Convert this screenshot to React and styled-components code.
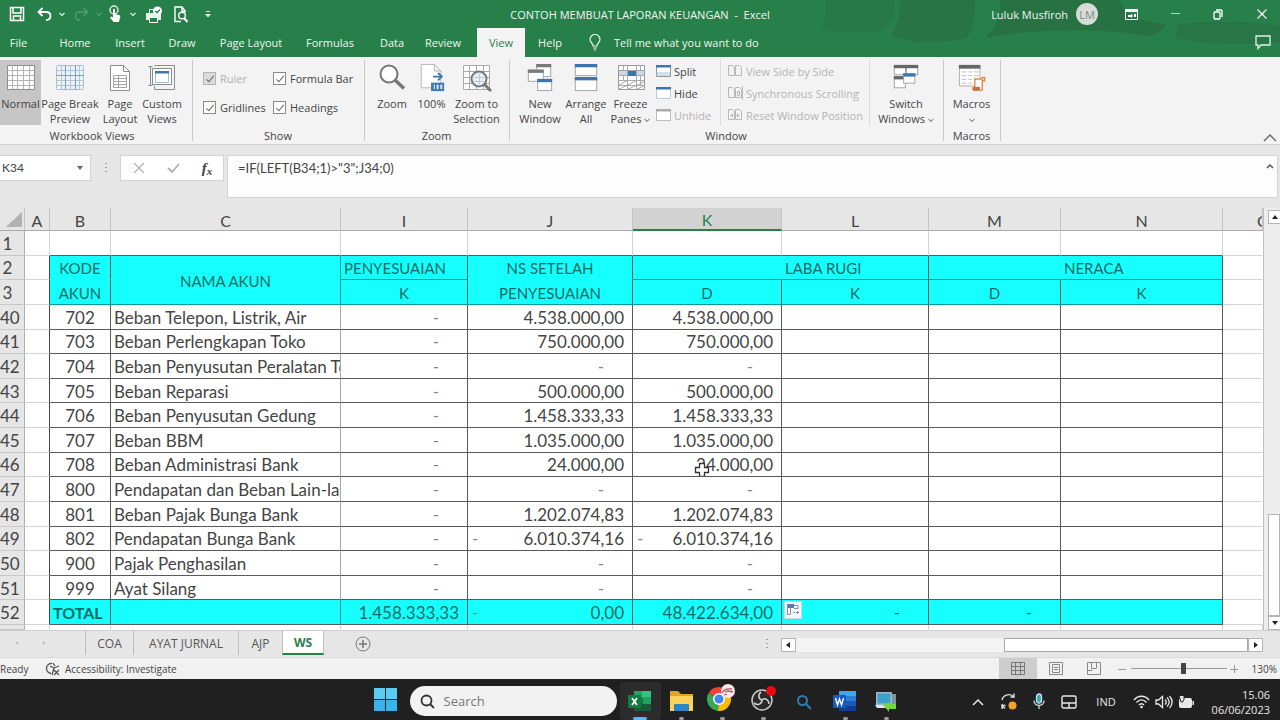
import React from "react"
import styled, { createGlobalStyle, css } from 'styled-components'

const uiFont=`"Open Sans", "Noto Sans", sans-serif`
const cellFont=`Lato, "Open Sans", sans-serif`
const green='#27804a'

const GlobalStyle=createGlobalStyle`
*{box-sizing:border-box;}
body{
margin:0;
font-family:${uiFont};
font-size:11px;
color:#444;
overflow:hidden;
}
button,input,textarea{
font:inherit;
color:inherit;
margin:0;
}
svg{display:block;}
`

const Page=styled.div`
height:100vh;
display:flex;
flex-direction:column;
`

const PlainButton=styled.button`
border:0;
padding:0;
background:none;
display:flex;
align-items:center;
justify-content:center;
gap:3px;
flex:none;
width:${p => p.$w ? p.$w + 'px' : 'auto'};
`

/* title bar and tabs */

const Top=styled.header`
position:relative;
background:${green};
color:#eef7f0;
`

const Clouds=styled.svg`
position:absolute;
top:0;
right:0;
`

const TitleBar=styled.div`
position:relative;
height:28px;
display:grid;
grid-template-columns:1fr auto 1fr;
align-items:center;
`

const TitleSide=styled.div`
display:flex;
align-items:center;
justify-content:${p => p.$end ? 'flex-end' : 'flex-start'};
`

const Title=styled.h1`
margin:0;
font-size:11px;
font-weight:400;
white-space:pre;
`

const Avatar=styled.span`
width:22px;
height:22px;
margin:0 6px 0 8px;
border-radius:50%;
background:#d8dcd8;
color:#7d8a80;
display:flex;
align-items:center;
justify-content:center;
`

const Tabs=styled.nav`
position:relative;
height:29px;
display:flex;
`

const Tab=styled.button`
border:0;
padding:0;
width:${p => p.$w}px;
background:${p => p.$active ? '#f3f3f3' : 'none'};
color:${p => p.$active ? green : '#eef7f0'};
white-space:nowrap;
`

const TellMe=styled.label`
display:flex;
align-items:center;
gap:12px;
margin-left:13px;
input{
width:200px;
border:0;
padding:0;
background:none;
}
input::placeholder{
color:#eef7f0;
opacity:1;
}
`

const Comments=styled(PlainButton)`
margin:0 8px 0 auto;
`

/* ribbon */

const Ribbon=styled.div`
height:88px;
display:flex;
background:#f3f3f3;
border-bottom:1px solid #d2d2d2;
`

const Group=styled.section`
flex:none;
display:flex;
flex-direction:column;
justify-content:space-between;
width:${p => p.$w}px;
margin:3px 0;
padding:0 8px 0 ${p => p.$left ? 0 : 7}px;
border-right:1px solid #c8c8c8;
`

const GroupBody=styled.div`
display:flex;
align-items:flex-start;
`

const GroupName=styled.h2`
margin:0;
font-size:11px;
line-height:10px;
font-weight:400;
text-align:center;
`

const BigButton=styled.button`
flex:none;
display:flex;
flex-direction:column;
align-items:center;
width:${p => p.$w}px;
height:65px;
padding:4px 0 0;
border:0;
background:${p => p.$active ? '#c6c6c6' : 'none'};
line-height:15px;
white-space:nowrap;
>svg{
flex:none;
height:28px;
margin-bottom:4px;
}
`

const Checks=styled.div`
display:grid;
grid-template-columns:70px 1fr;
row-gap:12px;
padding:10px 0 0 3px;
`

const CheckLabel=styled.label`
display:flex;
align-items:center;
gap:4px;
height:17px;
white-space:nowrap;
color:${p => p.$off ? '#b0b0b0' : '#444'};
input{
appearance:none;
flex:none;
position:relative;
width:13px;
height:13px;
border:1px solid #8a8a8a;
background:#fff;
}
input:disabled{
background:#dcdcdc;
border-color:#b4b4b4;
}
input:checked::after{
content:'';
position:absolute;
left:4px;
top:1px;
width:3px;
height:7px;
border:solid #666;
border-width:0 1px 1px 0;
transform:rotate(40deg);
}
`

const SmallList=styled.div`
flex:none;
display:flex;
flex-direction:column;
padding:0 4px 0 ${p => p.$line ? 6 : 4}px;
width:${p => p.$w}px;
${p => p.$line && css`
border-left:1px solid #dcdcdc;
border-right:1px solid #dcdcdc;
`}
`

const SmallButton=styled.button`
display:flex;
align-items:center;
gap:3px;
height:22px;
border:0;
padding:0;
background:none;
white-space:nowrap;
color:${p => p.disabled ? '#b4b4b4' : '#444'};
`

const Collapse=styled(PlainButton)`
margin:auto 3px 2px auto;
`

/* formula bar */

const FormulaBar=styled.div`
display:flex;
height:63px;
padding:10px 2px 0 0;
background:#e6e6e6;
font-family:${cellFont};
font-size:13px;
`

const NameBox=styled.label`
display:flex;
align-items:center;
width:91px;
height:26px;
padding-right:5px;
background:#fff;
border:1px solid #d4d4d4;
border-left:0;
input{
width:76px;
padding:0 0 2px 2px;
border:0;
background:none;
font-size:12px;
}
`

const Dots=styled.span`
width:29px;
height:26px;
display:flex;
align-items:center;
justify-content:center;
`

const FxBox=styled.div`
display:flex;
align-items:center;
width:104px;
height:26px;
margin-right:3px;
background:#fff;
border:1px solid #d4d4d4;
`

const Fx=styled.span`
font-family:"Liberation Serif", serif;
font-style:italic;
font-weight:700;
font-size:15px;
sub{
font-size:11px;
vertical-align:-2px;
}
`

const FormulaInput=styled.textarea`
flex:1;
height:43px;
padding:4px 10px;
border:1px solid #d4d4d4;
border-right:0;
background:#fdfdfd;
resize:none;
outline:0;
line-height:16px;
`

const FormulaEnd=styled.div`
height:43px;
padding:7px 3px;
background:#fdfdfd;
border:1px solid #d4d4d4;
border-left:0;
`

/* sheet */

const SheetArea=styled.main`
display:flex;
flex:1;
min-height:0;
background:#e6e6e6;
`

const SheetPane=styled.div`
flex:1;
min-width:0;
overflow:hidden;
`

const Sheet=styled.table`
width:100%;
height:100%;
table-layout:fixed;
border-collapse:separate;
border-spacing:0;
background:#fff;
font-family:${cellFont};
font-size:17px;
line-height:20px;
color:#444;
`

const ColHead=styled.th`
height:23px;
padding:${p => p.$cut ? '2px 0 0 34px' : '2px 0 0'};
overflow:hidden;
font-size:16px;
font-weight:400;
line-height:19px;
background:${p => p.$active ? '#d2d2d2' : '#e6e6e6'};
color:${p => p.$active ? green : '#444'};
border-right:1px solid #c4c4c4;
border-bottom:${p => p.$active ? `2px solid ${green}` : '1px solid #ababab'};
`

const Corner=styled.svg`
margin-left:6px;
`

const RowHead=styled.th`
padding:2px 9px 0 0;
font-weight:400;
background:#e6e6e6;
border-right:1px solid #b0b0b0;
border-bottom:1px solid #c8c8c8;
`

const Cell=styled.td`
position:relative;
padding:2px ${p => p.$dash ? 28 : p.$align === 'right' ? 8 : 0}px 0 ${p => p.$align === 'left' ? 3 : 0}px;
text-align:${p => p.$align || 'center'};
white-space:nowrap;
overflow:hidden;
border-right:1px solid ${p => p.$right || '#5a5a5a'};
border-bottom:1px solid ${p => p.$bottom || '#5a5a5a'};
${p => p.$dash && css`color:#888;`}
${p => p.$fill && css`
background:#16ffff;
color:#0b6b63;
`}
${p => p.$head && css`
font-size:15px;
`}
${p => p.$bold && css`
font-size:16px;
font-weight:700;
`}
`

const Tail=styled.tr`
height:5px;
td,th{padding:0;}
`

const Minus=styled.span`
float:left;
margin-left:4px;
color:#888;
`

const Cursor=styled.svg`
position:absolute;
left:61px;
top:9px;
`

const FillOptions=styled.button`
position:absolute;
left:2px;
top:1px;
width:18px;
height:18px;
padding:1px;
border:1px solid #c8d8d8;
background:#f6f6ff;
`

const ScrollV=styled.div`
width:17px;
padding:2px 0 0 4px;
display:flex;
flex-direction:column;
border-left:1px solid #c0c0c0;
background:#ededed;
`

const ArrowButton=styled.button`
flex:none;
width:${p => p.$wide ? 15 : 13}px;
height:14px;
padding:0;
display:flex;
align-items:center;
justify-content:center;
border:1px solid #b4b4b4;
background:#fff;
`

const TrackV=styled.div`
flex:1;
display:flex;
flex-direction:column;
justify-content:flex-end;
`

const ThumbV=styled.div`
height:26%;
border:1px solid #b4b4b4;
background:#fff;
`

/* sheet tabs */

const SheetTabs=styled.div`
display:flex;
height:27px;
background:#e6e6e6;
border-top:1px solid #cfcfcf;
`

const SheetNav=styled.div`
display:flex;
width:85px;
padding:0 28px 2px 4px;
justify-content:space-between;
align-items:center;
`

const SheetTab=styled.button`
width:${p => p.$w}px;
height:24px;
padding:0;
border:0;
background:${p => p.$active ? '#fff' : 'none'};
color:${p => p.$active ? green : '#555'};
font-size:12px;
font-weight:${p => p.$active ? 700 : 400};
white-space:nowrap;
border-left:1px solid #c0c0c0;
${p => p.$active && css`
border-bottom:2px solid ${green};
border-right:1px solid #c0c0c0;
`}
`

const ScrollH=styled.div`
display:flex;
align-items:flex-start;
width:39%;
margin:7px 17px 0 auto;
`

const TrackH=styled.div`
flex:1;
height:14px;
display:flex;
justify-content:flex-end;
background:#f3f3f3;
`

const ThumbH=styled.div`
width:54%;
border:1px solid #a8a8a8;
background:#fff;
`

/* status bar */

const StatusBar=styled.footer`
display:flex;
align-items:center;
height:22px;
background:#f1f1f1;
border-top:1px solid #dadada;
font-size:10px;
`

const Ready=styled.span`
width:44px;
`

const StatusRight=styled.div`
display:flex;
align-items:center;
align-self:stretch;
margin-left:auto;
padding-right:3px;
`

const ViewButton=styled(PlainButton)`
width:38px;
height:100%;
background:${p => p.$active ? '#cdcdcd' : 'none'};
`

const ZoomRange=styled.input`
appearance:none;
width:96px;
height:14px;
background:linear-gradient(#999,#999) center / 100% 1px no-repeat;
&::-webkit-slider-thumb{
appearance:none;
width:5px;
height:11px;
background:#444;
}
`

const ZoomValue=styled.span`
margin-left:11px;
`

/* taskbar */

const Taskbar=styled.div`
display:grid;
grid-template-columns:1fr auto 1fr;
height:41px;
background:#202020;
color:#e8e8e8;
`

const Apps=styled.div`
grid-column:2;
display:flex;
align-items:center;
padding-right:4px;
`

const AppButton=styled.button`
width:41px;
height:38px;
padding:${p => p.$top ?? 6}px 0 0;
border:0;
border-radius:4px;
background:${p => p.$active ? '#2c2c2c' : 'none'};
display:flex;
flex-direction:column;
justify-content:space-between;
align-items:center;
align-self:flex-end;
&::after{
content:'';
width:${p => p.$active ? 14 : 5}px;
height:3px;
border-radius:2px;
background:${p => p.$active ? '#5bb8ea' : p.$open ? '#9a9a9a' : 'none'};
}
`

const SearchBox=styled.label`
display:flex;
align-items:center;
gap:9px;
width:207px;
height:30px;
margin:3px 3px 0 9px;
padding-left:10px;
border-radius:15px;
background:#f2f2f2;
input{
width:150px;
border:0;
padding:0;
background:none;
outline:0;
font-size:13px;
}
input::placeholder{
color:#777;
opacity:1;
}
`

const Tray=styled.div`
display:flex;
align-items:center;
justify-content:flex-end;
padding:4px 10px 0 0;
`

const Clock=styled.time`
width:72px;
line-height:15px;
text-align:right;
`

const Caret=({ color = '#666', s = 6 }) => (
        <svg width={s} height={s} viewBox="0 0 6 6" fill="none" stroke={color} strokeWidth="1.2"><path d="M.5 2 3 4.4 5.5 2"/></svg>
)

const InlineSvg=styled.svg`
display:inline-block;
vertical-align:middle;
`

const TextCaret=() => (
        <InlineSvg width="6" height="6" viewBox="0 0 6 6" fill="none" stroke="#555"><path d="M.5 2 3 4.400 5.500 2"/></InlineSvg>
)

const Tri=({ d, color = '#222' }) => (
        <svg width="8" height="8" viewBox="0 0 8 8" fill={color}><path d={d}/></svg>
)

const GridIcon=({ stroke, frame }) => (
        <svg width="30" height="28" viewBox="0 0 30 28" fill="#fff" stroke={stroke}>
                <path stroke={frame} d="M1.5 1.5h27v24h-27z"/>
                <path d="M1.5 6.5h27M1.5 11.5h27M1.5 16.5h27M1.5 21.5h27M6.5 1.5v24M11.5 1.5v24M17.5 1.5v24M23.5 1.5v24"/>
        </svg>
)

const PageBreakIcon=() => (
        <svg width="30" height="28" viewBox="0 0 30 28" fill="none">
                <rect x="1.5" y="1.5" width="27" height="24" rx="1" fill="#eaf3fb" stroke="#a9bfd2"/>
                <path stroke="#b6c3ce" d="M1.5 6.5h27M1.5 16.5h27M1.5 21.5h27M6.5 1.5v24M15.5 1.5v24M24.5 1.5v24"/>
                <path stroke="#6da3cc" d="M1.5 11.5h27M10.5 1.5v24M20.5 1.5v24"/>
        </svg>
)

const PageLayoutIcon=() => (
        <svg width="30" height="28" viewBox="0 0 30 28" fill="none" stroke="#8c8c8c">
                <path fill="#fff" d="M5.5 1.5h13l6 6v19h-19z"/>
                <path d="M18.500 1.500v6h6"/>
                <path stroke="#a4a4a4" d="M8.500 11.500h13v12h-13zM8.500 14.500h13M8.500 17.500h13M8.500 20.500h13M13.500 11.500v12"/>
        </svg>
)

const CustomViewsIcon=() => (
        <svg width="30" height="28" viewBox="0 0 30 28" fill="none" stroke="#8c8c8c">
                <path d="M3.500 3v18M1.500 2.500h4M1.500 21.500h4M7.500 22v3.500h20v-24h-20"/>
                <path fill="#fff" d="M5.500 4.500h19v16h-19z"/>
                <path fill="#fff" stroke="#a3bed8" d="M8.500 8.500h13v10h-13z"/>
                <path fill="#3d76ad" stroke="none" d="M8 7h14v2.500H8z"/>
        </svg>
)

const ZoomIcon=() => (
        <svg width="30" height="28" viewBox="0 0 30 28" fill="none" stroke="#777">
                <circle cx="12" cy="10" r="8.500" fill="#fff" strokeWidth="2"/>
                <path strokeWidth="3.500" d="m18 16 9 8.500"/>
        </svg>
)

const Zoom100Icon=() => (
        <svg width="30" height="28" viewBox="0 0 30 30" fill="none">
                <path fill="#fff" stroke="#b4b4b4" d="M3.500.5h14l7 7v18h-21zM17.500.5v7h7"/>
                <path stroke="#3d76ad" strokeWidth="2" d="M16 13.500h10M21.500 9.500l4 4-4 4"/>
                <path fill="#3d7ab5" d="M14 20h14v9H14z"/>
                <path stroke="#fff" d="M17.500 22v5M20.500 22.500h1v4h-1zM24.500 22.500h1v4h-1z"/>
        </svg>
)

const ZoomSelIcon=() => (
        <svg width="30" height="28" viewBox="0 0 30 28" fill="none">
                <path fill="#fff" stroke="#aaa" d="M1.500 1.500h26v24h-26zM1.500 7.500h26M1.500 13.500h26M1.500 19.500h26M7.500 1.500v24M14.500 1.500v24M21.500 1.500v24"/>
                <circle cx="17" cy="15" r="7.500" fill="#e9eef3" stroke="#777" strokeWidth="2"/>
                <path stroke="#b9c8d6" d="M12 13.500h10M12 17.500h10M17.500 10v10"/>
                <path stroke="#777" strokeWidth="3" d="m22 20 7 7"/>
        </svg>
)

const Win=({ x, y, w, h, c }) => (
        <g>
                <rect x={x + .5} y={y + .5} width={w - 1} height={h - 1} fill="#fff" stroke="#a0a0a0"/>
                <rect x={x} y={y} width={w} height="3.500" fill={c}/>
        </g>
)

const NewWindowIcon=() => (
        <svg width="30" height="28" viewBox="0 0 30 30">
                <Win x={11} y={0} w={16} h={14} c="#7a7a7a"/>
                <Win x={2} y={6} w={17} h={13} c="#7a7a7a"/>
                <Win x={12} y={16} w={16} h={13} c="#3d76ad"/>
        </svg>
)

const ArrangeIcon=() => (
        <svg width="30" height="28" viewBox="0 0 30 30">
                <Win x={3} y={0} w={24} h={13} c="#3d76ad"/>
                <Win x={3} y={14} w={24} h={15} c="#3d76ad"/>
        </svg>
)

const FreezeIcon=() => (
        <svg width="30" height="28" viewBox="0 0 30 28" fill="none">
                <path fill="#fff" stroke="#999" d="M2.500 1.500h26v24h-26z"/>
                <path stroke="#aaa" d="M2.500 6.500h26M2.500 11.500h26M2.500 16.500h26M2.500 21.500h26M7.500 1.500v15M11.500 1.500v24M20.500 1.500v24M24.500 1.500v20"/>
                <path stroke="#aaa" d="m2.500 21.500 9-5M2.500 25.500l18-9M11.500 25.500l17-8M20.500 25.500l8-4"/>
                <path fill="#3d76ad" d="M12 7h8v5h-8z"/>
                <path fill="#c4d9ec" d="M3 7h8v4H3zM21 7h7v4h-7z"/>
        </svg>
)

const SwitchIcon=() => (
        <svg width="30" height="28" viewBox="0 0 30 30">
                <Win x={2} y={1} w={13} h={11} c="#666"/>
                <Win x={15} y={1} w={13} h={11} c="#666"/>
                <Win x={2} y={13} w={13} h={13} c="#666"/>
                <Win x={12} y={10} w={13} h={11} c="#3d76ad"/>
        </svg>
)

const MacrosIcon=() => (
        <svg width="30" height="28" viewBox="0 0 30 30" fill="none">
                <path fill="#fff" stroke="#aaa" d="M1.500 1.500h22v22h-22z"/>
                <path fill="#666" d="M1 1h23v4H1z"/>
                <path stroke="#bbb" d="M4 8.500h5M11 8.500h4M17 8.500h5M4 12.500h5M11 12.500h4M17 12.500h5M4 16.500h5M11 16.500h4M4 20.500h5M11 20.500h4"/>
                <path fill="#fff" stroke="#e0894a" strokeWidth="1.500" d="M18 16h8v-1.500h2.500V18H26v10h-8z"/>
                <path fill="#c9703a" d="M15.500 24.500h8v4h-8z"/>
        </svg>
)

const MiniWin=({ c, frame, half }) => (
        <svg width="15" height="14" viewBox="0 0 15 14">
                <path fill="#fff" stroke={frame} d="M.5 1.500h14v11H.5z"/>
                <path fill={c} d="M0 1h15v2.500H0z"/>
                {half && <path fill="#cfe0ef" d="M1 8h13v4H1z"/>}
        </svg>
)

const Pages=({ kind }) => (
        <svg width="16" height="14" viewBox="0 0 16 14" fill="none" stroke="#b8b8b8">
                <path d="M1.500 1.500h4l2 2v8h-6zM8.500 1.500h4l2 2v8h-6z"/>
                {kind === 1 && <path d="M15.500 0v14M10.500 5.500h2v4h-2z"/>}
                {kind === 2 && <path d="M3 7.500h3M10 7.500h3M5 5.500l1 2-1 2M11 5.500l-1 2 1 2"/>}
        </svg>
)

const FileIcons={
        save: <svg width="16" height="16" viewBox="0 0 16 16" fill="none" stroke="#fff" strokeWidth="1.500"><path d="M1.500 1.500h13v13h-13zM4 2v5h8V2M4.500 14v-4h7v4"/></svg>,
        undo: <svg width="16" height="14" viewBox="0 0 16 14" fill="none" stroke="#fff" strokeWidth="1.800"><path d="M5.500 1 1.500 5l4 4M2 5h7c6 0 6 8 0 8"/></svg>,
        redo: <svg width="16" height="14" viewBox="0 0 16 14" fill="none" stroke="#4f9c6a" strokeWidth="1.600"><path d="m10.500 1 4 4-4 4M14 5H7C1 5 1 13 7 13"/></svg>,
        touch: <svg width="14" height="18" viewBox="0 0 14 18" fill="none"><circle cx="6" cy="5" r="4" stroke="#dcebe0" strokeWidth="1.500"/><path fill="#fff" d="M5 4.500c0-1 2-1 2 0V9l4 1c1 .3 1.500 1 1.200 2L11 17H5.500L2 12.500l1-1 2 1z"/></svg>,
        print: <svg width="18" height="17" viewBox="0 0 18 17" fill="none"><path fill="#e6f0e8" d="M1 7h15v7H1z"/><path stroke="#fff" fill={green} d="M4.500 11.500h8v5h-8zM4.500 7V3.500h5"/><circle cx="12.500" cy="5" r="4.500" fill="#fff"/><path stroke={green} strokeWidth="1.300" d="m10.300 5 1.700 1.700L15 3.500"/></svg>,
        preview: <svg width="16" height="17" viewBox="0 0 16 17" fill="none" stroke="#fff" strokeWidth="1.400"><path d="M12.500 5.500 9 1H2v14.500h6M9 1v4.500h4"/><circle cx="9" cy="9.500" r="3.300"/><path strokeWidth="2" d="m11 12 3.500 4"/></svg>,
}

const AppIcons={
        windows: <svg width="23" height="23" viewBox="0 0 23 23"><path fill="#5ccdf2" d="M0 0h11v11H0zM12 0h11v11H12z"/><path fill="#38b3ec" d="M0 12h11v11H0zM12 12h11v11H12z"/></svg>,
        excel: <svg width="24" height="22" viewBox="0 0 24 22"><path fill="#21a366" d="M6 1h17v20H6z"/><path fill="#33c481" d="M14 1h9v6h-9z"/><path fill="#107c41" d="M6 8h9v6H6z"/><path fill="#185c37" d="M6 14h17v7H6z"/><rect y="5" width="13" height="13" rx="1" fill="#107c41"/><path stroke="#fff" strokeWidth="1.800" d="m4 8 5 7M9 8l-5 7"/></svg>,
        folder: <svg width="25" height="22" viewBox="0 0 25 22"><path fill="#e0a526" d="M1 1h8l3 3h12v6H1z"/><path fill="#fbd158" d="M1 6h23v15H1z"/><path fill="#2a86c8" d="M5 15q0-1 1-1h13q1 0 1 1v6H5z"/></svg>,
        chrome: <svg width="30" height="28" viewBox="0 0 30 28"><path fill="#ea4335" d="M12 15 1.600 9A12 12 0 0 1 22.400 9z"/><path fill="#34a853" d="m12 15-1 12A12 12 0 0 1 1.600 9z"/><path fill="#fbbc05" d="m12 15 10.400-6A12 12 0 0 1 11 27z"/><circle cx="12" cy="15" r="6" fill="#fff"/><circle cx="12" cy="15" r="4.500" fill="#4285f4"/><circle cx="21" cy="7" r="7" fill="#f7e9ea"/><path fill="none" stroke="#b5525e" strokeWidth="1.300" d="M15 9c3-5 6-4 10-4M18 8l3-1 5 1M17 11l3-1"/></svg>,
        obs: <svg width="28" height="26" viewBox="0 0 28 26" fill="none"><circle cx="13" cy="14" r="10" fill="#2a2a2a" stroke="#c8c8c8" strokeWidth="1.500"/><path stroke="#d0d0d0" strokeWidth="1.600" d="M13 14c-4-1-4-6-1-8M13 14c3-3 7 0 7 4M13 14c0 4-4 6-8 3"/><circle cx="22" cy="5" r="5" fill="#e80c10"/></svg>,
        find: <svg width="16" height="16" viewBox="0 0 16 16" fill="none" stroke="#2a7fb4" strokeWidth="2"><circle cx="6.500" cy="6.500" r="4.500"/><path d="m10 10 5 5"/></svg>,
        word: <svg width="24" height="22" viewBox="0 0 24 22"><path fill="#2b7cd3" d="M6 1h17v20H6z"/><path fill="#41a5ee" d="M6 1h17v5H6z"/><path fill="#185abd" d="M6 11h17v5H6z"/><path fill="#103f91" d="M6 16h17v5H6z"/><rect y="5" width="13" height="13" rx="1" fill="#185abd"/><path fill="none" stroke="#fff" strokeWidth="1.400" d="m2.500 8 2 7 2-6 2 6 2-7"/></svg>,
        monitor: <svg width="24" height="22" viewBox="0 0 24 22"><path fill="#9fb7c8" d="M2 2h16v13H2z"/><path fill="#3aa0cc" d="M3.500 3.500h13v10h-13z"/><path fill="#7d94a2" d="M18 4h4v12h-4z"/><path fill="#dfe6ea" d="M1 15h18l-2 3H3z"/><path fill="#74d63c" d="m9 15 6-3v2h7v5h-7v3z"/></svg>,
}

const tray={
        up: <svg width="12" height="8" viewBox="0 0 12 8" fill="none" stroke="#e8e8e8" strokeWidth="1.500"><path d="m1 7 5-5 5 5"/></svg>,
        sync: <svg width="18" height="18" viewBox="0 0 18 18" fill="none" stroke="#ddd" strokeWidth="1.400"><path d="M2 7a7 7 0 0 1 12-3M14 .5V4h-3.500M5 15.500A7 7 0 0 1 2 11M2 16v-3.500h3.500"/><circle cx="12.500" cy="12.500" r="4" fill="#f0a030" stroke="none"/></svg>,
        mic: <svg width="14" height="17" viewBox="0 0 14 17" fill="none" stroke="#c9dfe3" strokeWidth="1.300"><rect x="4.500" y="1" width="5" height="9" rx="2.500" fill="#3ba7b8"/><path d="M2 7.500c0 6.500 10 6.500 10 0M7 12.500V16"/></svg>,
        pad: <svg width="16" height="14" viewBox="0 0 16 14" fill="none" stroke="#e8e8e8" strokeWidth="1.400"><rect x="1" y="1" width="14" height="12" rx="1.500"/><path d="M1 8h14M8 8v5"/></svg>,
        wifi: <svg width="17" height="14" viewBox="0 0 17 14" fill="none" stroke="#e8e8e8" strokeWidth="1.400"><path d="M1 5c4-5 11-5 15 0M3.500 7.500c3-3.500 7-3.500 10 0M6 10c1.500-1.700 3.500-1.700 5 0"/><circle cx="8.500" cy="12" r="1.300" fill="#e8e8e8" stroke="none"/></svg>,
        volume: <svg width="18" height="14" viewBox="0 0 18 14" fill="none" stroke="#e8e8e8" strokeWidth="1.300"><path d="M1 5h2.500L7.500 1.500v11L3.500 9H1zM10 4.500c1.500 1.500 1.500 3.500 0 5M12 2.500c3 3 3 6 0 9M14.500 1c3.500 4 3.500 8 0 12"/></svg>,
        battery: <svg width="17" height="14" viewBox="0 0 17 14"><rect x="1" y="3" width="13" height="10" rx="2" fill="#e8e8e8"/><path fill="#e8e8e8" d="M14.500 6h1.500v4h-1.500z"/><path stroke="#202020" fill="#e8e8e8" d="M1 .5h5v4L4.500 7H3z"/></svg>,
}

const cols=[
        ['', 25], ['A', 25], ['B', 61], ['C', 230], ['I', 127], ['J', 165],
        ['K', 149], ['L', 147], ['M', 132], ['N', 162], ['O', 40],
]

const rows=[
        [40, '702', 'Beban Telepon, Listrik, Air', '-', '4.538.000,00', '4.538.000,00'],
        [41, '703', 'Beban Perlengkapan Toko', '-', '750.000,00', '750.000,00'],
        [42, '704', 'Beban Penyusutan Peralatan Toko', '-', '-', '-'],
        [43, '705', 'Beban Reparasi', '-', '500.000,00', '500.000,00'],
        [44, '706', 'Beban Penyusutan Gedung', '-', '1.458.333,33', '1.458.333,33'],
        [45, '707', 'Beban BBM', '-', '1.035.000,00', '1.035.000,00'],
        [46, '708', 'Beban Administrasi Bank', '-', '24.000,00', '24.000,00'],
        [47, '800', 'Pendapatan dan Beban Lain-lain', '-', '-', '-'],
        [48, '801', 'Beban Pajak Bunga Bank', '-', '1.202.074,83', '1.202.074,83'],
        [49, '802', 'Pendapatan Bunga Bank', '-', '-6.010.374,16', '-6.010.374,16'],
        [50, '900', 'Pajak Penghasilan', '-', '-', '-'],
        [51, '999', 'Ayat Silang', '-', '-', '-'],
]

const faint='#d4d4d4'
const teal='#0a9a98'
const cyan='#16ffff'

const Amount=({ value, children, ...rest }) => {
        const negative=value.length > 1 && value[0] === '-'
        return (
                <Cell $align="right" $dash={value === '-'} {...rest}>
                        {negative && <Minus>-</Minus>}
                        {negative ? value.slice(1) : value}
                        {children}
                </Cell>
        )
}

const Header=() => (
        <Top>
                <Clouds width="580" height="57" viewBox="0 0 580 57" fill="#296f42" aria-hidden="true">
                        <path opacity=".35" d="M125 0h70q0 20-12 30-30 6-62-2 6-14 4-28z"/>
                        <path opacity=".7" d="M200 0h75q2 20-8 38c-24 6-54 6-76-2q10-18 9-36z"/>
                        <path opacity=".85" d="M300 0h120q4 20 46 24-2 8-16 12c-50-8-110-8-165 2q18-18 15-38z"/>
                        <path opacity=".6" d="M478 24q50-6 102 2v16c-40 4-80 2-105-4z"/>
                </Clouds>
                <TitleBar>
                        <TitleSide>
                                <PlainButton $w={34} aria-label="Save">{FileIcons.save}</PlainButton>
                                <PlainButton $w={22} aria-label="Undo">{FileIcons.undo}</PlainButton>
                                <PlainButton $w={12} aria-label="Undo list"><Caret color="#dfeee3"/></PlainButton>
                                <PlainButton $w={26} aria-label="Redo" disabled>{FileIcons.redo}</PlainButton>
                                <PlainButton $w={10} aria-label="Redo list" disabled><Caret color="#4f9c6a"/></PlainButton>
                                <PlainButton $w={22} aria-label="Touch mode">{FileIcons.touch}</PlainButton>
                                <PlainButton $w={14} aria-label="Touch mode list"><Caret color="#dfeee3"/></PlainButton>
                                <PlainButton $w={28} aria-label="Quick print">{FileIcons.print}</PlainButton>
                                <PlainButton $w={26} aria-label="Print preview">{FileIcons.preview}</PlainButton>
                                <PlainButton $w={28} aria-label="Customize toolbar">
                                        <svg width="6" height="7" viewBox="0 0 6 7" fill="#dfeee3"><path d="M1 0h4v1H1zM0 3h6L3 6.500z"/></svg>
                                </PlainButton>
                        </TitleSide>
                        <Title>CONTOH MEMBUAT LAPORAN KEUANGAN  -  Excel</Title>
                        <TitleSide $end>
                                Luluk Musfiroh
                                <Avatar>LM</Avatar>
                                <PlainButton $w={54} aria-label="Ribbon display options">
                                        <svg width="13" height="11" viewBox="0 0 13 11"><path fill="none" stroke="#fff" d="M.5.5h12v10H.5z"/><path fill="#fff" d="M0 0h13v3H0zM3 6h3V4.500L8 7 6 9V8H3zM9 5h2v3H9z"/></svg>
                                </PlainButton>
                                <PlainButton $w={34} aria-label="Minimize">
                                        <svg width="9" height="2"><path fill="#b9d6c1" d="M0 0h9v1H0z"/></svg>
                                </PlainButton>
                                <PlainButton $w={52} aria-label="Restore">
                                        <svg width="10" height="11" viewBox="0 0 10 11" fill="none" stroke="#fff" strokeWidth="1.300"><rect x="1" y="3" width="6" height="7" rx="1"/><path d="M3 1h5q1 0 1 1v6"/></svg>
                                </PlainButton>
                                <PlainButton $w={36} aria-label="Close">
                                        <svg width="10" height="10" viewBox="0 0 10 10" stroke="#fff" strokeWidth="1.200"><path d="m.5.5 9 9M9.500.5l-9 9"/></svg>
                                </PlainButton>
                        </TitleSide>
                </TitleBar>
                <Tabs>
                        <Tab $w={37}>File</Tab>
                        <Tab $w={76}>Home</Tab>
                        <Tab $w={34}>Insert</Tab>
                        <Tab $w={70}>Draw</Tab>
                        <Tab $w={68}>Page Layout</Tab>
                        <Tab $w={90}>Formulas</Tab>
                        <Tab $w={34}>Data</Tab>
                        <Tab $w={68}>Review</Tab>
                        <Tab $w={48} $active>View</Tab>
                        <Tab $w={50}>Help</Tab>
                        <TellMe>
                                <svg width="14" height="17" viewBox="0 0 14 17" fill="none" stroke="#e4f1e7" strokeWidth="1.200"><path d="M5 12c0-3-3-3.500-3-6.500a5 5 0 0 1 10 0C12 8.500 9 9 9 12zM5 14h4M6 16h2"/></svg>
                                <input aria-label="Tell me what you want to do" placeholder="Tell me what you want to do"/>
                        </TellMe>
                        <Comments $w={18} aria-label="Comments">
                                <svg width="16" height="15" viewBox="0 0 16 15" fill="none" stroke="#e4f1e7" strokeWidth="1.300"><path d="M1 1h14v9H6l-3 3.500V10H1z"/></svg>
                        </Comments>
                </Tabs>
        </Top>
)

const RibbonBar=() => (
        <Ribbon>
                <Group $w={193} $left>
                        <GroupBody>
                                <BigButton $w={41} $active><GridIcon stroke="#b4b4b4" frame="#8c8c8c"/>Normal</BigButton>
                                <BigButton $w={58}><PageBreakIcon/>Page Break<br/>Preview</BigButton>
                                <BigButton $w={42}><PageLayoutIcon/>Page<br/>Layout</BigButton>
                                <BigButton $w={42}><CustomViewsIcon/>Custom<br/>Views</BigButton>
                        </GroupBody>
                        <GroupName>Workbook Views</GroupName>
                </Group>
                <Group $w={172}>
                        <Checks>
                                <CheckLabel $off><input type="checkbox" defaultChecked disabled/>Ruler</CheckLabel>
                                <CheckLabel><input type="checkbox" defaultChecked/>Formula Bar</CheckLabel>
                                <CheckLabel><input type="checkbox" defaultChecked/>Gridlines</CheckLabel>
                                <CheckLabel><input type="checkbox" defaultChecked/>Headings</CheckLabel>
                        </Checks>
                        <GroupName>Show</GroupName>
                </Group>
                <Group $w={145}>
                        <GroupBody>
                                <BigButton $w={40}><ZoomIcon/>Zoom</BigButton>
                                <BigButton $w={39}><Zoom100Icon/>100%</BigButton>
                                <BigButton $w={51}><ZoomSelIcon/>Zoom to<br/>Selection</BigButton>
                        </GroupBody>
                        <GroupName>Zoom</GroupName>
                </Group>
                <Group $w={434}>
                        <GroupBody>
                                <BigButton $w={46}><NewWindowIcon/>New<br/>Window</BigButton>
                                <BigButton $w={46}><ArrangeIcon/>Arrange<br/>All</BigButton>
                                <BigButton $w={43}><FreezeIcon/>Freeze<span>Panes <TextCaret/></span></BigButton>
                                <SmallList $w={68}>
                                        <SmallButton><MiniWin c="#3d76ad" frame="#999" half/>Split</SmallButton>
                                        <SmallButton><MiniWin c="#3d76ad" frame="#bcd"/>Hide</SmallButton>
                                        <SmallButton disabled><MiniWin c="#aaa" frame="#bbb"/>Unhide</SmallButton>
                                </SmallList>
                                <SmallList $w={150} $line>
                                        <SmallButton disabled><Pages/>View Side by Side</SmallButton>
                                        <SmallButton disabled><Pages kind={1}/>Synchronous Scrolling</SmallButton>
                                        <SmallButton disabled><Pages kind={2}/>Reset Window Position</SmallButton>
                                </SmallList>
                                <BigButton $w={72}><SwitchIcon/>Switch<span>Windows <TextCaret/></span></BigButton>
                        </GroupBody>
                        <GroupName>Window</GroupName>
                </Group>
                <Group $w={57}>
                        <GroupBody>
                                <BigButton $w={41}><MacrosIcon/>Macros<span><TextCaret/></span></BigButton>
                        </GroupBody>
                        <GroupName>Macros</GroupName>
                </Group>
                <Collapse aria-label="Collapse ribbon">
                        <svg width="14" height="9" viewBox="0 0 14 9" fill="none" stroke="#666" strokeWidth="1.400"><path d="m1 8 6-6 6 6"/></svg>
                </Collapse>
        </Ribbon>
)

const SheetTable=() => (
        <Sheet>
                <colgroup>
                        {cols.map(([name, w]) => <col key={name} style={{ width: w }}/>)}
                </colgroup>
                <thead>
                        <tr>
                                {cols.map(([name]) => (
                                        <ColHead key={name} $active={name === 'K'} $cut={name === 'O'}>
                                                {name || <Corner width="16" height="16" viewBox="0 0 16 16"><path fill="#b2b2b2" d="M16 0v15H0z"/></Corner>}
                                        </ColHead>
                                ))}
                        </tr>
                </thead>
                <tbody>
                        <tr>
                                <RowHead>1</RowHead>
                                <Cell $right={faint} $bottom={faint}/>
                                {cols.slice(2, 10).map(([name]) => <Cell key={name} $right={faint}/>)}
                                <Cell $right="#fff" $bottom={faint}/>
                        </tr>
                        <tr>
                                <RowHead>2</RowHead>
                                <Cell $right="#444" $bottom={faint}/>
                                <Cell $fill $head $bottom={cyan}>KODE</Cell>
                                <Cell $fill $head rowSpan={2} $right={teal} $bottom={teal}>NAMA AKUN</Cell>
                                <Cell $fill $head $align="left" $bottom={teal}>PENYESUAIAN</Cell>
                                <Cell $fill $head $bottom={cyan}>NS SETELAH</Cell>
                                <Cell $fill $head $right={cyan} $bottom={teal}/>
                                <Cell $fill $head $align="left" $bottom={teal}>LABA RUGI</Cell>
                                <Cell $fill $head $right={cyan} $bottom={teal}/>
                                <Cell $fill $head $align="left" $bottom={teal}>NERACA</Cell>
                                <Cell $right="#fff" $bottom={faint}/>
                        </tr>
                        <tr>
                                <RowHead>3</RowHead>
                                <Cell $right="#444" $bottom={faint}/>
                                <Cell $fill $head $bottom={teal}>AKUN</Cell>
                                <Cell $fill $head $bottom={teal}>K</Cell>
                                <Cell $fill $head $bottom={teal}>PENYESUAIAN</Cell>
                                <Cell $fill $head $bottom={teal}>D</Cell>
                                <Cell $fill $head $bottom={teal}>K</Cell>
                                <Cell $fill $head $bottom={teal}>D</Cell>
                                <Cell $fill $head $bottom={teal}>K</Cell>
                                <Cell $right="#fff" $bottom={faint}/>
                        </tr>
                        {rows.map(([n, code, name, adj, ns, profit]) => (
                                <tr key={n}>
                                        <RowHead>{n}</RowHead>
                                        <Cell $right="#444" $bottom={faint}/>
                                        <Cell>{code}</Cell>
                                        <Cell $align="left" $right="#a8a8a8">{name}</Cell>
                                        <Amount value={adj}/>
                                        <Amount value={ns}/>
                                        <Amount value={profit}>
                                                {n === 46 && (
                                                        <Cursor width="16" height="16" viewBox="0 0 16 16"><path fill="#fff" stroke="#333" strokeWidth="1.300" d="M5.500 1.500h5v4h4v5h-4v4h-5v-4h-4v-5h4z"/></Cursor>
                                                )}
                                        </Amount>
                                        <Cell/>
                                        <Cell/>
                                        <Cell/>
                                        <Cell $right="#fff" $bottom={faint}/>
                                </tr>
                        ))}
                        <tr>
                                <RowHead>52</RowHead>
                                <Cell $right="#444" $bottom={faint}/>
                                <Cell $fill $align="left" $bold>TOTAL</Cell>
                                <Cell $fill $right={teal}/>
                                <Amount $fill value="1.458.333,33"/>
                                <Amount $fill value="-0,00"/>
                                <Amount $fill value="48.422.634,00"/>
                                <Amount $fill value="-">
                                        <FillOptions aria-label="Auto fill options">
                                                <svg width="14" height="14" viewBox="0 0 14 14" fill="none" stroke="#8090a8"><path fill="#5a78b0" stroke="none" d="M1 1h7v4H1z"/><path d="M1.500 1.500v10h3M4.500 5v6M8 2.500h4v3H8M7 9.500h2M10 9.500h3M11.500 8v3"/></svg>
                                        </FillOptions>
                                </Amount>
                                <Amount $fill value="-"/>
                                <Cell $fill/>
                                <Cell $right="#fff" $bottom={faint}/>
                        </tr>
                        <Tail>
                                <RowHead/>
                                {cols.slice(1).map(([name]) => <Cell key={name} $right={faint} $bottom="#fff"/>)}
                        </Tail>
                </tbody>
        </Sheet>
)

const App=() => {

        return (
        <>
                <GlobalStyle/>
                <Page>
                        <Header/>
                        <RibbonBar/>
                        <FormulaBar>
                                <NameBox>
                                        <input aria-label="Name box" defaultValue="K34"/>
                                        <Tri color="#666" d="M1 2h6L4 6z"/>
                                </NameBox>
                                <Dots><svg width="2" height="12" fill="#a0a0a0"><path d="M0 1h2v1H0zM0 5h2v1H0zM0 9h2v1H0z"/></svg></Dots>
                                <FxBox>
                                        <PlainButton $w={35} aria-label="Cancel"><svg width="10" height="10" viewBox="0 0 10 10" stroke="#b0b0b0" strokeWidth="1.300"><path d="m0 0 10 10M10 0 0 10"/></svg></PlainButton>
                                        <PlainButton $w={34} aria-label="Enter"><svg width="13" height="10" viewBox="0 0 13 10" fill="none" stroke="#b0b0b0" strokeWidth="1.800"><path d="m1 5 4 4 7-8"/></svg></PlainButton>
                                        <PlainButton $w={34} aria-label="Insert function"><Fx>f<sub>x</sub></Fx></PlainButton>
                                </FxBox>
                                <FormulaInput aria-label="Formula" defaultValue={'=IF(LEFT(B34;1)>"3";J34;0)'}/>
                                <FormulaEnd><PlainButton aria-label="Collapse formula bar"><svg width="8" height="6" viewBox="0 0 8 6" fill="none" stroke="#555" strokeWidth="1.500"><path d="m1 5 3-3 3 3"/></svg></PlainButton></FormulaEnd>
                        </FormulaBar>
                        <SheetArea>
                                <SheetPane><SheetTable/></SheetPane>
                                <ScrollV>
                                        <ArrowButton aria-label="Scroll up"><Tri d="M1 6h6L4 2z"/></ArrowButton>
                                        <TrackV><ThumbV/></TrackV>
                                        <ArrowButton aria-label="Scroll down"><Tri d="M1 2h6L4 6z"/></ArrowButton>
                                </ScrollV>
                        </SheetArea>
                        <SheetTabs>
                                <SheetNav>
                                        <PlainButton $w={26} aria-label="Previous sheet"><Tri color="#b4b4b4" d="M5 2v4L3 4z"/></PlainButton>
                                        <PlainButton $w={26} aria-label="Next sheet"><Tri color="#b4b4b4" d="M3 2v4l2-2z"/></PlainButton>
                                </SheetNav>
                                <SheetTab $w={48}>COA</SheetTab>
                                <SheetTab $w={105}>AYAT JURNAL</SheetTab>
                                <SheetTab $w={44}>AJP</SheetTab>
                                <SheetTab $w={42} $active>WS</SheetTab>
                                <PlainButton $w={78} aria-label="New sheet"><svg width="16" height="16" viewBox="0 0 16 16" fill="none" stroke="#777"><circle cx="8" cy="8" r="7"/><path strokeWidth="1.500" d="M8 4v8M4 8h8"/></svg></PlainButton>
                                <ScrollH>
                                        <svg width="17" height="14" fill="#a0a0a0"><path d="M2 1h2v1H2zM2 5h2v1H2zM2 9h2v1H2z"/></svg>
                                        <ArrowButton $wide aria-label="Scroll left"><Tri d="M6 1v6L2 4z"/></ArrowButton>
                                        <TrackH><ThumbH/></TrackH>
                                        <ArrowButton $wide aria-label="Scroll right"><Tri d="M2 1v6l4-3z"/></ArrowButton>
                                </ScrollH>
                        </SheetTabs>
                        <StatusBar>
                                <Ready>Ready</Ready>
                                <PlainButton>
                                        <svg width="18" height="14" viewBox="0 0 18 14" fill="none" stroke="#555" strokeWidth="1.300"><path d="M8 1.500a5 5 0 1 0-1 10M9 1l2 3M6 4l4 2-2 7M10 6l5-2M10 8l5 5M15 8l-5 5"/></svg>
                                        Accessibility: Investigate
                                </PlainButton>
                                <StatusRight>
                                        <ViewButton $active aria-label="Normal view"><svg width="14" height="13" viewBox="0 0 14 13" fill="none" stroke="#777"><path d="M.5.5h13v12H.5zM.5 4.500h13M.5 8.500h13M4.500.5v12M9.500.5v12"/></svg></ViewButton>
                                        <ViewButton aria-label="Page layout view"><svg width="14" height="13" viewBox="0 0 14 13" fill="none" stroke="#888"><path d="M.5.5h13v12H.5zM3.500 2.500h7v8h-7zM5 5.500h4M5 7.500h4"/></svg></ViewButton>
                                        <ViewButton aria-label="Page break view"><svg width="14" height="13" viewBox="0 0 14 13" fill="none" stroke="#888"><path d="M.5.5h13v12H.5zM4.500.5v6h4.500M9.500.5v6M.5 8.500h5"/></svg></ViewButton>
                                        <PlainButton $w={18} aria-label="Zoom out"><svg width="8" height="8" stroke="#999"><path d="M0 4.500h8"/></svg></PlainButton>
                                        <ZoomRange type="range" aria-label="Zoom" min="0" max="100" defaultValue="55"/>
                                        <PlainButton $w={14} aria-label="Zoom in"><svg width="8" height="8" stroke="#999"><path d="M0 4.500h8M4.500 0v8"/></svg></PlainButton>
                                        <ZoomValue>130%</ZoomValue>
                                </StatusRight>
                        </StatusBar>
                        <Taskbar>
                                <Apps>
                                        <PlainButton $w={31} aria-label="Start">{AppIcons.windows}</PlainButton>
                                        <SearchBox>
                                                <svg width="15" height="15" viewBox="0 0 15 15" fill="none" stroke="#333" strokeWidth="1.800"><circle cx="6.500" cy="6.500" r="5"/><path d="m10 10 4 4"/></svg>
                                                <input placeholder="Search" aria-label="Search"/>
                                        </SearchBox>
                                        <AppButton $active $top={8} aria-label="Excel">{AppIcons.excel}</AppButton>
                                        <AppButton $open $top={8} aria-label="File Explorer">{AppIcons.folder}</AppButton>
                                        <AppButton $open $top={2} aria-label="Chrome">{AppIcons.chrome}</AppButton>
                                        <AppButton $open $top={4} aria-label="OBS Studio">{AppIcons.obs}</AppButton>
                                        <AppButton $top={12} aria-label="Magnifier">{AppIcons.find}</AppButton>
                                        <AppButton $open $top={8} aria-label="Word">{AppIcons.word}</AppButton>
                                        <AppButton $open $top={8} aria-label="Remote desktop">{AppIcons.monitor}</AppButton>
                                </Apps>
                                <Tray>
                                        <PlainButton $w={30} aria-label="Hidden icons">{tray.up}</PlainButton>
                                        <PlainButton $w={31} aria-label="Sync">{tray.sync}</PlainButton>
                                        <PlainButton $w={30} aria-label="Microphone">{tray.mic}</PlainButton>
                                        <PlainButton $w={30} aria-label="Touchpad">{tray.pad}</PlainButton>
                                        <PlainButton $w={44}>IND</PlainButton>
                                        <PlainButton $w={26} aria-label="Network">{tray.wifi}</PlainButton>
                                        <PlainButton $w={20} aria-label="Volume">{tray.volume}</PlainButton>
                                        <PlainButton $w={24} aria-label="Battery">{tray.battery}</PlainButton>
                                        <Clock>15.06<br/>06/06/2023</Clock>
                                </Tray>
                        </Taskbar>
                </Page>
        </>
        )

}
export default App
